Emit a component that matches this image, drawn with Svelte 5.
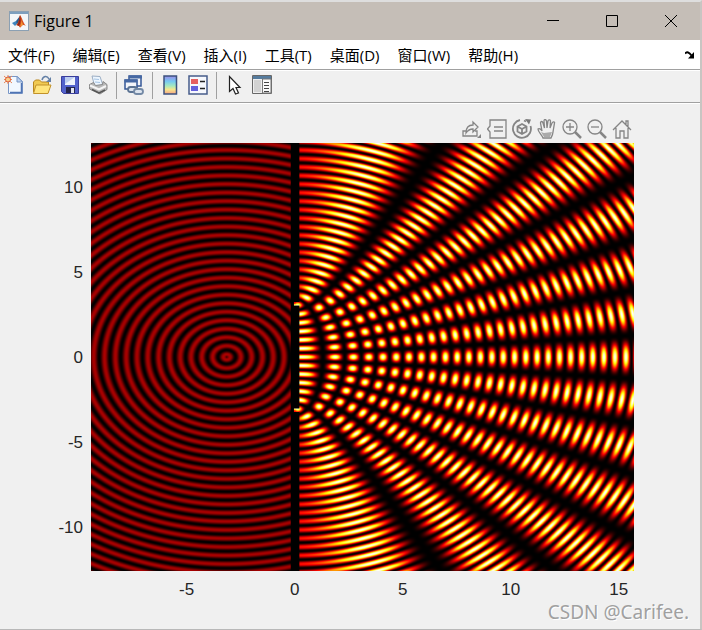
<script lang="ts">
  import { onMount } from "svelte";

  const menus = ["文件(F)", "编辑(E)", "查看(V)", "插入(I)", "工具(T)", "桌面(D)", "窗口(W)", "帮助(H)"];

  // axes limits: -3π..5π by -4π..4π
  const xMin = -3 * Math.PI;
  const xMax = 5 * Math.PI;
  const yMin = -4 * Math.PI;
  const yMax = 4 * Math.PI;
  const xTicks = [-5, 0, 5, 10, 15];
  const yTicks = [10, 5, 0, -5, -10];
  const n = 503;

  let field: HTMLCanvasElement;

  const clamp = (v: number) => Math.max(0, Math.min(1, v));

  // "hot" colormap
  function hot(v: number) {
    return [clamp(v / 0.375) * 255, clamp((v - 0.375) / 0.375) * 255, clamp((v - 0.75) / 0.25) * 255];
  }

  function intensity(x: number, y: number) {
    const k = 2 * Math.PI;
    const phase = 0.155 * k;
    const slit = Math.abs(Math.abs(y) - Math.PI) < 0.1;
    if (x > -0.2 && x < 0.2 && !(slit && x > -0.03)) return 0;
    if (x < -0.03) {
      const r = Math.hypot(x + Math.PI, y);
      return Math.cos(k * r - phase) ** 2 / 4;
    }
    const r1 = Math.hypot(x, y - Math.PI);
    const r2 = Math.hypot(x, y + Math.PI);
    return (Math.cos(k * r1 - phase) + Math.cos(k * r2 - phase)) ** 2 / 4;
  }

  onMount(() => {
    const ctx = field.getContext("2d")!;
    const img = ctx.createImageData(n, n);
    for (let j = 0; j < n; j++) {
      const y = yMax - ((j + 0.5) / n) * (yMax - yMin);
      for (let i = 0; i < n; i++) {
        const x = xMin + ((i + 0.5) / n) * (xMax - xMin);
        const p = (j * n + i) * 4;
        img.data.set([...hot(intensity(x, y)), 255], p);
      }
    }
    ctx.putImageData(img, 0, 0);
  });
</script>

<div class="window">
  <header class="titlebar">
    <svg class="logo" viewBox="0 0 20 20" width="20" height="20">
      <rect x=".5" y=".5" width="19" height="19" fill="#f4f6f8" stroke="#8ba0b3" />
      <path d="M1 1h18v2H1z" fill="#7d9fbe" />
      <path d="M3 12l4-2 2 2-3 3z" fill="#3d83bd" />
      <path d="M7 10l4-5-1 6-2 2z" fill="#235a8f" />
      <path d="M11 4c2 2 3 8 6 11-3-2-4-1-5 1-1 1-2 0-2-1l-3-1c3-2 3-7 4-10z" fill="#d8511f" />
      <path d="M11 4c1 4 1 8-1 11l-2-1c2-2 2-6 3-10z" fill="#8d2419" />
      <path d="M12 8c1 2 0 5-1 8 1-1 2-2 3-2z" fill="#f39a35" />
    </svg>
    <h1>Figure 1</h1>
    <div class="controls">
      <button aria-label="Minimize"><svg viewBox="0 0 12 12"><path d="M0 5.5h12" /></svg></button>
      <button aria-label="Maximize"><svg viewBox="0 0 12 12"><path d="M.5.5h11v11H.5z" /></svg></button>
      <button aria-label="Close"><svg viewBox="0 0 12 12"><path d="M0 0l12 12M12 0L0 12" /></svg></button>
    </div>
  </header>

  <nav class="menubar">
    {#each menus as menu}
      <button>{menu}</button>
    {/each}
    <button class="dock" aria-label="Dock">
      <svg viewBox="0 0 10 8" width="10" height="8">
        <path d="M0 2.500C2 .500 4 1 6.500 4.500" fill="none" stroke="#000" stroke-width="2" />
        <path d="M9 1v6.500H3z" fill="#000" />
      </svg>
    </button>
  </nav>

  <div class="toolbar">
    <button aria-label="New">
      <svg viewBox="0 0 20 20">
        <path d="M4.5 1.500h9l5 5v12h-14z" fill="#f2f8ff" stroke="#7896c6" />
        <path d="M6 17.500h12M17.500 8v10" stroke="#4f74b4" stroke-width="1.500" />
        <path d="M13 1.500v5.500h5.500z" fill="#bcd2f0" stroke="#7896c6" />
        <path d="M0 1l8 7M8 1L0 8M4 0v9M0 4.500h8" stroke="#e8895a" />
        <circle cx="4" cy="4.500" r="2.500" fill="#fbd08c" stroke="#dc5836" />
      </svg>
    </button>
    <button aria-label="Open">
      <svg viewBox="0 0 20 20">
        <path d="M1.500 17V7l2-2h4l2 2h7v10z" fill="#f0ca52" stroke="#b88720" />
        <path d="M4 10h15l-3 8.500H1.500z" fill="#ffe57c" stroke="#c2922a" />
        <path d="M10 5c1-4 5-5 7-1" fill="none" stroke="#6480a6" stroke-width="1.500" />
        <path d="M19 2v5h-5z" fill="#6480a6" />
      </svg>
    </button>
    <button aria-label="Save">
      <svg viewBox="0 0 20 20">
        <path d="M1.500 1.500h17v17h-15l-2-2z" fill="#5262cc" stroke="#3a3e9b" />
        <path d="M5 2h10v8H5z" fill="#eef3fb" />
        <path d="M5 2h10L5 9z" fill="#bccdf0" />
        <path d="M6 12h9v6H6z" fill="#24264d" />
        <path d="M11 13h3v5h-3z" fill="#e2e6ef" />
      </svg>
    </button>
    <button aria-label="Print">
      <svg viewBox="0 0 20 20">
        <path d="M4 1l8 .500 3 9-8 2z" fill="#edf6ff" stroke="#9caec4" />
        <path d="M6 4l5 .500M7 7l5 .500" stroke="#a5c3e2" />
        <path d="M1.500 9.500l4-2 2 3 7-1 .500-3 4 3v5l-7 4.500-10.500-5z" fill="#b8b8b8" stroke="#888" />
        <path d="M2 10.500l9 4 7-3.500" fill="none" stroke="#f5f5f5" stroke-width="2" />
        <path d="M4 14.500l7 3.500 6-3" fill="none" stroke="#555" stroke-width="1.500" />
      </svg>
    </button>
    <span class="separator"></span>
    <button aria-label="Link Plot">
      <svg viewBox="0 0 20 20">
        <path d="M5 1h12v10H5z" fill="#f3f5fa" stroke="#345797" stroke-width="1.500" />
        <path d="M5 .500h13v3H5z" fill="#4668a3" />
        <path d="M1 5h12v9H1z" fill="#f3f5fa" stroke="#345797" stroke-width="1.500" />
        <path d="M.500 4.500h13v3H.500z" fill="#4668a3" />
        <rect x="4" y="12" width="9" height="5" rx="2.500" fill="#dce4ee" stroke="#5b7393" stroke-width="1.800" />
        <rect x="10" y="14" width="9" height="5" rx="2.500" fill="#dce4ee" stroke="#7389a5" stroke-width="1.800" />
      </svg>
    </button>
    <span class="separator"></span>
    <button aria-label="Insert Colorbar">
      <svg viewBox="0 0 20 20">
        <defs>
          <linearGradient id="bar" x2="0" y2="1">
            <stop stop-color="#9c8ce8" />
            <stop offset=".3" stop-color="#76c9f2" />
            <stop offset=".55" stop-color="#a5e9bf" />
            <stop offset=".75" stop-color="#f6e68c" />
            <stop offset="1" stop-color="#f6a483" />
          </linearGradient>
        </defs>
        <path d="M4 1h12.500v18H4z" fill="url(#bar)" stroke="#3c527e" stroke-width="1.500" />
      </svg>
    </button>
    <button aria-label="Insert Legend">
      <svg viewBox="0 0 20 20">
        <path d="M1 1h18v18H1z" fill="#f6f8fd" stroke="#475c8b" stroke-width="1.500" />
        <path d="M3 4h7v5H3z" fill="#e65f60" />
        <path d="M3 11h7v5H3z" fill="#6460dc" />
        <path d="M12 6.500h5M12 13.500h5" stroke="#222" stroke-width="1.500" />
      </svg>
    </button>
    <span class="separator"></span>
    <button aria-label="Edit Plot">
      <svg viewBox="0 0 20 20">
        <path d="M5.500 1.500v15l3.500-3 2.500 5.500 3-1-2.500-5.500h4z" fill="#fff" stroke="#222" stroke-width="1.200" />
      </svg>
    </button>
    <button aria-label="Property Inspector">
      <svg viewBox="0 0 20 20">
        <path d="M.5.5h19v18H.5z" fill="#eee" stroke="#686868" />
        <path d="M1 1h18v3H1z" fill="#557b9d" />
        <path d="M10.500 4h8.500v14h-8.500z" fill="#fafafa" stroke="#777" />
        <path d="M2 5h7v12H2z" fill="#d2d2d2" />
        <path d="M12 7.500h5M12 10.500h5M12 13.500h5M12 16.500h5" stroke="#444" />
      </svg>
    </button>
  </div>

  <main class="figure">
    <div class="axes-tools">
      <button aria-label="Export">
        <svg viewBox="0 0 20 20">
          <path d="M4 12H1v5h14v-5h-2" />
          <path d="M4 14c0-6 3-8 7-8V3l5 5-5 5v-3c-3 0-5 1-7 4z" />
          <path d="M19 15v4h-4z" fill="#858585" stroke="none" />
        </svg>
      </button>
      <button aria-label="Data Brushing">
        <svg viewBox="0 0 20 20"><path d="M3 7V1h16v18H3v-6l-2.500-3zM7 8h9M7 12h9" /></svg>
      </button>
      <button aria-label="Rotate 3D">
        <svg viewBox="0 0 20 20">
          <path d="M8 1A9 9 0 1 0 18.500 7M12 1.500l2 1" stroke-width="1.800" />
          <path d="M13 0l6 .500-2 5z" fill="#777" stroke="none" />
          <path d="M10 5l4.500 2.500v5L10 15l-4.500-2.500v-5zM5.500 7.500L10 10l4.500-2.500M10 10v5" stroke-width="1.800" />
        </svg>
      </button>
      <button aria-label="Pan">
        <svg viewBox="0 0 20 20">
          <path d="M6 19c-1-3-5-6-5-9 1-1 3 0 4 2L3.500 4c0-2 2-2 2.500 0l1.500 5L7 2c0-2 2-2 2.500 0l.500 7 1-7c.500-2 2.500-1 2.500 0L13 9l2-5c1-2 3-1 2.500 0L16 13c0 2-1 4-2 6z" />
          <path d="M7 18c-1-2-2-3-3-5l3 1 8-1-2 5z" fill="#aaa" stroke="none" />
        </svg>
      </button>
      <button aria-label="Zoom In">
        <svg viewBox="0 0 20 20"><circle cx="8" cy="8" r="7" /><path d="M4 8h8M8 4v8" /><path d="M13 13l6 6" stroke-width="2.500" /></svg>
      </button>
      <button aria-label="Zoom Out">
        <svg viewBox="0 0 20 20"><circle cx="8" cy="8" r="7" /><path d="M4 8h8" /><path d="M13 13l6 6" stroke-width="2.500" /></svg>
      </button>
      <button aria-label="Restore View">
        <svg viewBox="0 0 20 20"><path d="M1 11l9-9 9 9M4 9v10h4v-7h4v7h4V9M14 6V2h2v6" /></svg>
      </button>
    </div>

    <div class="y-axis">
      {#each yTicks as t}
        <span style="top: {((yMax - t) / (yMax - yMin)) * 100}%">{t}</span>
      {/each}
    </div>
    <div class="plot">
      <canvas bind:this={field} width={n} height={n}></canvas>
    </div>
    <div class="x-axis">
      {#each xTicks as t}
        <span style="left: {((t - xMin) / (xMax - xMin)) * 100}%">{t}</span>
      {/each}
    </div>
    <p class="watermark">CSDN @Carifee.</p>
  </main>
</div>

<style>
  :global(body) {
    margin: 0;
    background: #c4bdb6;
  }

  .window {
    display: flex;
    flex-direction: column;
    box-sizing: border-box;
    min-height: 100vh;
    border-top: 2px solid #dedede;
    border-right: 2px solid #c8c5c2;
    border-bottom: 1px solid #b8b8b8;
    background: #f0f0f0;
    font-family: "Open Sans", "Noto Sans CJK SC", sans-serif;
    color: #000;
  }

  button {
    padding: 0;
    border: 0;
    background: none;
    color: inherit;
    font: inherit;
  }

  svg {
    display: block;
  }

  .titlebar {
    display: flex;
    align-items: center;
    height: 38px;
    padding-left: 9px;
    background: #c5beb7;
  }

  h1 {
    margin: 0 0 0 5px;
    font-size: 16px;
    font-weight: 400;
  }

  .controls {
    display: flex;
    margin-left: auto;
  }

  .controls button {
    display: grid;
    place-items: center;
    width: 59px;
    height: 38px;
  }

  .controls svg {
    width: 12px;
    height: 12px;
    fill: none;
    stroke: #000;
  }

  .menubar {
    display: flex;
    align-items: center;
    gap: 18px;
    height: 29px;
    padding: 0 5px 0 8px;
    border-bottom: 1px solid #a0a0a0;
    background: #fff;
    font-size: 15px;
    line-height: 28px;
    white-space: nowrap;
  }

  .dock {
    margin-left: auto;
  }

  .toolbar {
    display: flex;
    align-items: center;
    gap: 8px;
    box-sizing: border-box;
    height: 33px;
    padding: 0 0 3px 4px;
    border-top: 1px solid #fff;
    border-bottom: 1px solid #a0a0a0;
  }

  .toolbar button svg {
    width: 20px;
    height: 20px;
    fill: none;
  }

  .separator {
    width: 1px;
    height: 27px;
    margin-right: -1px;
    background: #a0a0a0;
  }

  .figure {
    position: relative;
    flex: 1;
    display: grid;
    grid-template-columns: 13% 1fr 66px;
    grid-template-rows: 39px minmax(240px, 1fr) 58px;
    border-top: 1px solid #fff;
    font-family: "Liberation Sans", Arial, sans-serif;
    font-size: 17px;
    color: #262626;
  }

  .axes-tools {
    grid-column: 2;
    display: flex;
    justify-content: flex-end;
    align-items: flex-end;
    gap: 5px;
    padding: 0 2px 4px 0;
  }

  .axes-tools svg {
    width: 20px;
    height: 20px;
    fill: none;
    stroke: #858585;
    stroke-width: 1.3;
  }

  .y-axis {
    position: relative;
    grid-area: 2 / 1;
    line-height: 22px;
  }

  .y-axis span {
    position: absolute;
    right: 8px;
    padding-top: 2px;
    transform: translateY(-50%);
  }

  .plot {
    position: relative;
    grid-area: 2 / 2;
  }

  .plot canvas {
    position: absolute;
    inset: 0;
    width: 100%;
    height: 100%;
  }

  .x-axis {
    position: relative;
    grid-area: 3 / 2;
  }

  .x-axis span {
    position: absolute;
    top: 9px;
    transform: translateX(-50%);
  }

  .watermark {
    position: absolute;
    right: 11px;
    bottom: 3px;
    margin: 0;
    font: 19px/28px "Noto Sans", sans-serif;
    color: #a0a0a0;
    text-shadow: 1px 1px #fff;
  }
</style>
